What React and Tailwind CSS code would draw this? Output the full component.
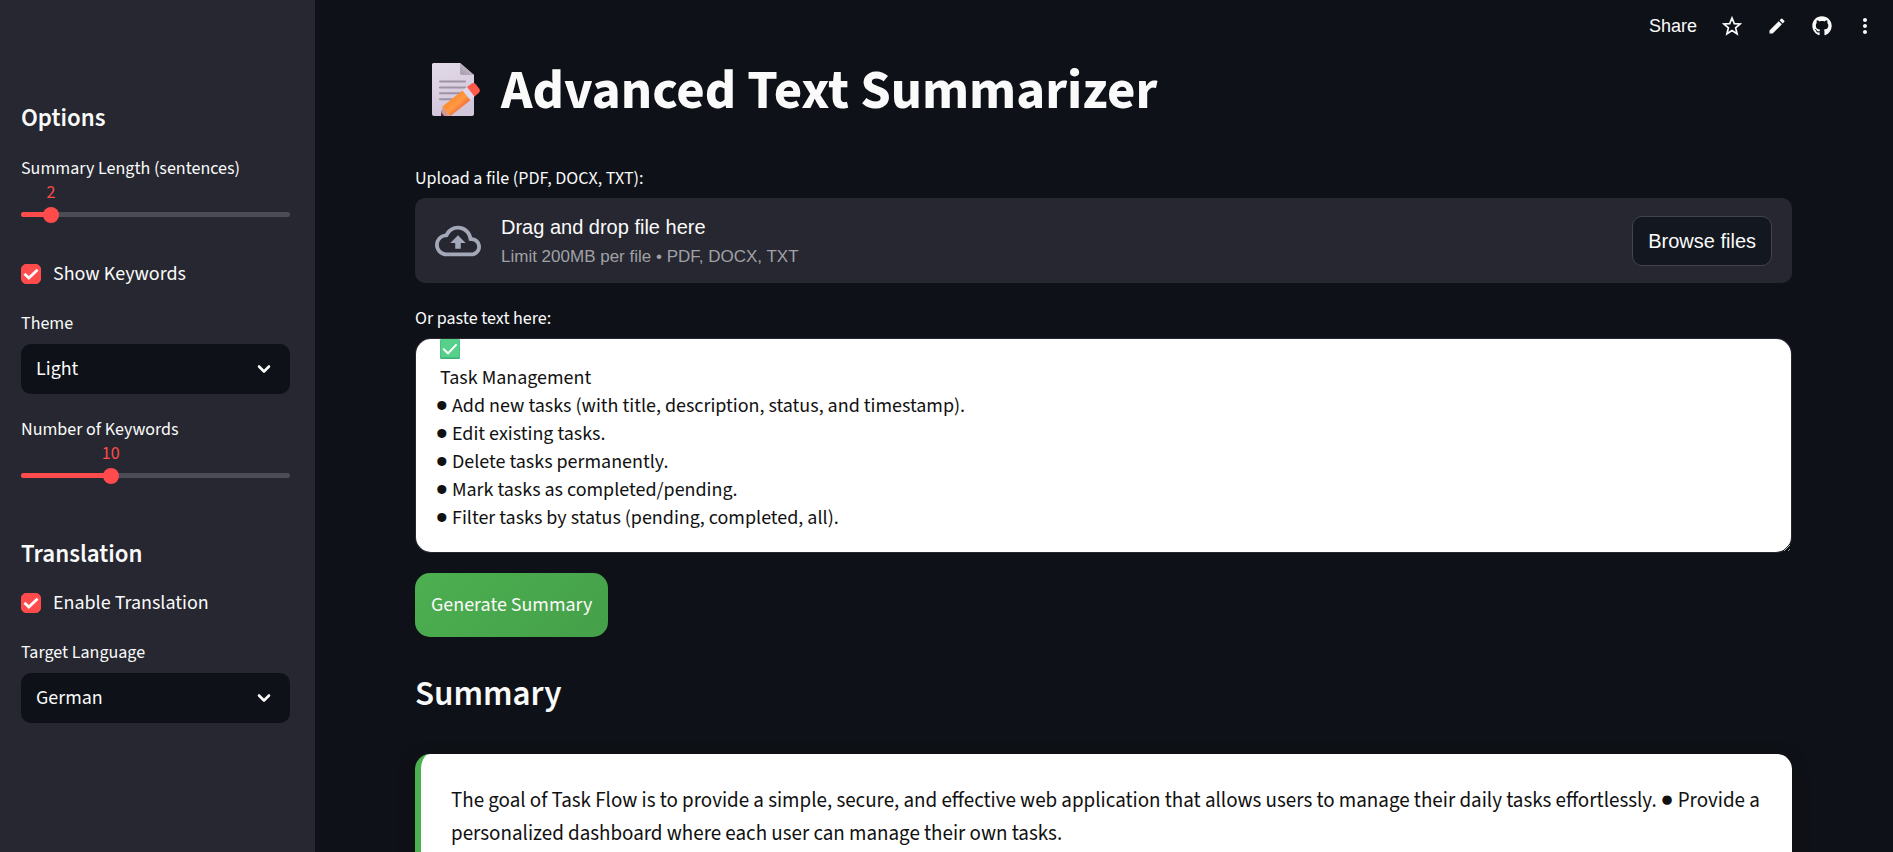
import { useEffect, useRef, useState } from "react";
import { MdOutlineCloudUpload, MdEdit, MdMoreVert } from "react-icons/md";
import { FaGithub } from "react-icons/fa";

const initialText = [
  "Task Flow helps users manage their daily tasks.",
  "",
  " Task Management",
  "● Add new tasks (with title, description, status, and timestamp).",
  "● Edit existing tasks.",
  "● Delete tasks permanently.",
  "● Mark tasks as completed/pending.",
  "● Filter tasks by status (pending, completed, all).",
].join("\n");

function Slider({ id, label, min, max, initial }) {
  const [value, setValue] = useState(initial);
  const percent = ((value - min) / (max - min)) * 100;
  return (
    <div className="pb-3">
      <label htmlFor={id} className="block text-lg leading-8">
        {label}
      </label>
      <div className="relative h-4 text-lg leading-4 text-[#ff4b4b]">
        <output
          htmlFor={id}
          className="absolute top-0 -translate-x-1/2"
          style={{ left: `${percent}%` }}
        >
          {value}
        </output>
      </div>
      <div className="grid h-[27px] items-center">
        <div className="col-start-1 row-start-1 h-[5px] overflow-hidden rounded-full bg-[#4c4c57]">
          <div className="h-full bg-[#ff4b4b]" style={{ width: `${percent}%` }} />
        </div>
        <input
          id={id}
          type="range"
          min={min}
          max={max}
          value={value}
          onChange={(e) => setValue(Number(e.target.value))}
          className="col-start-1 row-start-1 -mx-2 h-4 cursor-pointer appearance-none bg-transparent [&::-webkit-slider-thumb]:size-4 [&::-webkit-slider-thumb]:appearance-none [&::-webkit-slider-thumb]:rounded-full [&::-webkit-slider-thumb]:bg-[#ff4b4b]"
        />
      </div>
    </div>
  );
}

function Checkbox({ label }) {
  const [checked, setChecked] = useState(true);
  return (
    <label className="flex h-7 items-center gap-3 text-xl leading-7">
      <span className="grid size-5 place-items-center">
        <input
          type="checkbox"
          checked={checked}
          onChange={(e) => setChecked(e.target.checked)}
          className="col-start-1 row-start-1 size-5 appearance-none rounded-[5px] border border-[#4c4c57] checked:border-[#ff4b4b] checked:bg-[#ff4b4b]"
        />
        {checked && (
          <svg
            viewBox="0 0 17 13"
            className="pointer-events-none col-start-1 row-start-1 w-4"
            fill="none"
            stroke="#fafafa"
            strokeWidth="3"
            aria-hidden="true"
          >
            <path d="M1.5 6.2 6.2 10.6 15.5 1.8" />
          </svg>
        )}
      </span>
      {label}
    </label>
  );
}

function Select({ id, label, options }) {
  return (
    <div>
      <label htmlFor={id} className="mb-1 block text-lg leading-8">
        {label}
      </label>
      <div className="relative">
        <select
          id={id}
          className="h-[50px] w-full appearance-none rounded-[10px] bg-[#0e1117] px-[15px] text-xl leading-7 text-[#fafafa]"
        >
          {options.map((o) => (
            <option key={o}>{o}</option>
          ))}
        </select>
        <svg
          viewBox="0 0 14 9"
          className="pointer-events-none absolute top-1/2 right-[19px] w-[14px] -translate-y-1/2"
          fill="none"
          stroke="#fafafa"
          strokeWidth="2.6"
          strokeLinecap="round"
          strokeLinejoin="round"
          aria-hidden="true"
        >
          <path d="M2 2 7 7 12 2" />
        </svg>
      </div>
    </div>
  );
}

function MemoIcon() {
  return (
    <svg viewBox="0 0 50 56" className="h-14 w-[50px]" role="img" aria-label="Memo">
      <defs>
        <linearGradient id="page" x1="0" y1="0" x2="0.3" y2="1">
          <stop offset="0" stopColor="#e2dae8" />
          <stop offset="1" stopColor="#d2c6da" />
        </linearGradient>
        <linearGradient id="fold" x1="0" y1="1" x2="1" y2="0">
          <stop offset="0" stopColor="#a79cae" />
          <stop offset="1" stopColor="#cfc5d5" />
        </linearGradient>
        <linearGradient id="wood" x1="0.3" y1="0.3" x2="0.75" y2="0.75">
          <stop offset="0" stopColor="#ff8a2b" />
          <stop offset="0.5" stopColor="#ff9a45" />
          <stop offset="1" stopColor="#ee5f33" />
        </linearGradient>
      </defs>
      <path d="M1 3.5A1.5 1.5 0 0 1 2.5 2H29L43 14V53A2 2 0 0 1 41 55H3A2 2 0 0 1 1 53Z" fill="url(#page)" />
      <path d="M29 2 43 14H31A2 2 0 0 1 29 12Z" fill="url(#fold)" />
      <path
        d="M9 20.5H34M9 26.5H34M9 32.3H31M9 38.3H24"
        stroke="#9d93a5"
        strokeWidth="2"
        strokeLinecap="round"
      />
      <path d="M10 55 10.5 49.5 15 55Z" fill="#4b2745" />
      <path d="M10.3 51 12 44.5 19.5 54.5 13 55Z" fill="#d89a8d" />
      <path d="M11.5 45.5 31.5 29.5 39.5 39 19.5 55Z" fill="url(#wood)" />
      <path d="M31.5 29.5 36 26 43.5 35.5 39.5 39Z" fill="#dcd8ee" />
      <path d="M36 26 41 22.3Q43 21.3 44.8 23.3L48.5 28Q49.6 30 48 31.8L43.5 35.5Z" fill="#fd5a4c" />
    </svg>
  );
}

function CheckMarkIcon() {
  return (
    <svg
      viewBox="0 0 20 20"
      className="pointer-events-none absolute top-0 left-6 size-5"
      role="img"
      aria-label="Done"
    >
      <rect width="20" height="20" rx="1.5" fill="#3fae74" />
      <rect x="0.5" width="19" height="18.6" rx="1" fill="#57d08c" />
      <path d="M3.2 9.8 8 14.3 16.6 5.4" fill="none" stroke="#fff" strokeWidth="1.9" />
    </svg>
  );
}

function Sidebar() {
  return (
    <aside className="flex w-[315px] shrink-0 flex-col gap-5 bg-[#262730] pt-[103px] pr-[25px] pl-[21px]">
      <h2 className="text-[25px] leading-[30px] font-semibold">Options</h2>
      <Slider id="length" label="Summary Length (sentences)" min={1} max={10} initial={2} />
      <Checkbox label="Show Keywords" />
      <Select id="theme" label="Theme" options={["Light", "Dark"]} />
      <Slider id="keywords" label="Number of Keywords" min={5} max={20} initial={10} />
      <h2 className="mt-[18px] text-[25px] leading-[30px] font-semibold">Translation</h2>
      <Checkbox label="Enable Translation" />
      <Select id="language" label="Target Language" options={["German", "French", "Spanish"]} />
    </aside>
  );
}

function Toolbar() {
  return (
    <header className="flex h-[51px] shrink-0 items-center justify-end gap-[25px] pr-5">
      <button type="button" className="font-['Liberation_Sans',sans-serif] text-lg leading-6">
        Share
      </button>
      <button type="button" aria-label="Star">
        <svg viewBox="0 0 20 20" className="size-5" fill="none" stroke="currentColor" strokeWidth="1.7" strokeLinejoin="miter">
          <path d="M10 2 12.3 7.6 18.2 8 13.6 11.8 15.1 17.8 10 14.6 4.9 17.8 6.4 11.8 1.8 8 7.7 7.6Z" />
        </svg>
      </button>
      <button type="button" aria-label="Edit">
        <MdEdit className="size-5" />
      </button>
      <button type="button" aria-label="View source on GitHub">
        <FaGithub className="size-5" />
      </button>
      <button type="button" aria-label="More options" className="flex w-4 justify-center">
        <MdMoreVert className="size-6 shrink-0" />
      </button>
    </header>
  );
}

export default function App() {
  const [text, setText] = useState(initialText);
  const area = useRef(null);

  useEffect(() => {
    area.current.scrollTop = area.current.scrollHeight;
  }, []);

  return (
    <div className="flex h-screen bg-[#0e1117] font-['Source_Sans_3','Noto_Sans_CJK_SC',sans-serif] text-[#fafafa]">
      <Sidebar />
      <div className="flex min-w-0 flex-1 flex-col overflow-y-auto [scrollbar-width:none]">
        <Toolbar />
        <main className="flex flex-col pr-[101px] pb-16 pl-[100px]">
          <h1 className="mt-2.5 flex h-14 items-center gap-5 pl-4 text-[55px] leading-[56px] font-bold">
            <MemoIcon />
            <span className="pt-1">Advanced Text Summarizer</span>
          </h1>

          <label htmlFor="file" className="mt-[46px] mb-[3px] text-lg leading-8">
            Upload a file (PDF, DOCX, TXT):
          </label>
          <section className="flex h-[85px] items-center rounded-[10px] bg-[#262730] px-5 font-['Liberation_Sans',sans-serif]">
            <MdOutlineCloudUpload className="mr-5 size-[46px] text-[#a3a8b8]" />
            <div className="flex flex-1 flex-col gap-1 pt-0.5">
              <span className="text-xl leading-[26px]">Drag and drop file here</span>
              <span className="text-[17px] leading-[26px] text-[#a0a1a6]">
                Limit 200MB per file • PDF, DOCX, TXT
              </span>
            </div>
            <input id="file" type="file" accept=".pdf,.docx,.txt" className="hidden" />
            <button
              type="button"
              onClick={() => document.getElementById("file").click()}
              className="h-[50px] rounded-[10px] border border-[#41444c] bg-[#131720] px-[15px] text-xl"
            >
              Browse files
            </button>
          </section>

          <label htmlFor="text" className="mt-5 mb-[3px] text-lg leading-8">
            Or paste text here:
          </label>
          <div className="relative flex rounded-[15px] border border-[#262730] bg-[#262730]">
            <textarea
              id="text"
              ref={area}
              value={text}
              onChange={(e) => setText(e.target.value)}
              className="h-[213px] w-full resize-y rounded-[15px] bg-white p-5 text-xl leading-7 text-[#111111] [scrollbar-width:none]"
            />
            <CheckMarkIcon />
          </div>

          <button
            type="button"
            className="mt-5 h-16 self-start rounded-[15px] bg-linear-135 from-[#4caf50] to-[#45a049] px-4 text-xl"
          >
            Generate Summary
          </button>

          <h2 className="mt-9 text-[35px] leading-[42px] font-semibold">Summary</h2>

          <section className="mt-[39px] rounded-[15px] border-l-[6px] border-[#4caf50] bg-white p-[30px] text-[21px] leading-[33px] text-[#111111] shadow-[0_5px_15px_rgba(17,17,17,0.9)]">
            The goal of Task Flow is to provide a simple, secure, and effective web application that
            allows users to manage their daily tasks effortlessly. ● Provide a personalized
            dashboard where each user can manage their own tasks.
          </section>
        </main>
      </div>
    </div>
  );
}
